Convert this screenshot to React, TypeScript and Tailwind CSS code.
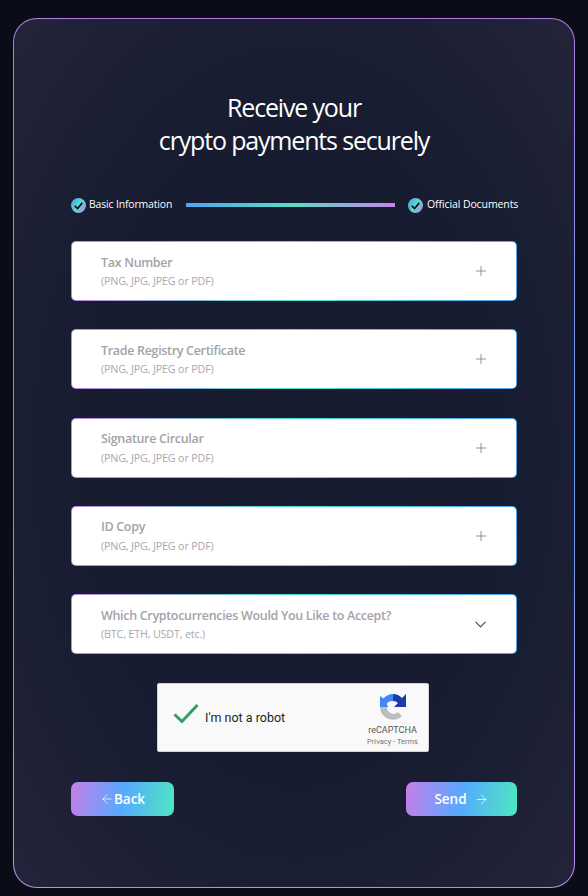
import React from "react";
import { Plus, ChevronDown, ArrowLeft, ArrowRight } from "lucide-react";

function Check({ id }: { id: string }) {
  return (
    <svg width="15" height="15" viewBox="0 0 16 16" className="shrink-0">
      <defs>
        <linearGradient id={id} x1="0" y1="0.2" x2="1" y2="0.8">
          <stop offset="0" stopColor="#4fa3f0" />
          <stop offset="0.5" stopColor="#55dcc8" />
          <stop offset="1" stopColor="#c084e8" />
        </linearGradient>
      </defs>
      <circle cx="8" cy="8" r="8" fill={`url(#${id})`} />
      <path d="M4 8.4 7 11.2 12 5.2" fill="none" stroke="#0b0d18" strokeWidth="1.7" />
    </svg>
  );
}

function Field({ title, sub, chevron, dir }: { title: string; sub: string; chevron?: boolean; dir: string }) {
  return (
    <div className={`h-[60px] rounded-[5px] p-px ${dir}`}>
      <div className="h-full rounded-[4px] bg-white pl-[29px] pr-[26px] flex items-center justify-between">
        <div className="flex flex-col">
          <span className="text-[12.5px] leading-[17px] font-semibold text-[#a3a3a8] tracking-[-0.32px]">{title}</span>
          <span className="text-[10.75px] leading-[15px] mt-[3.5px] -mb-[0.5px] text-[#a8a8ad] tracking-[-0.17px]">{sub}</span>
        </div>
        {chevron ? (
          <ChevronDown size={19} strokeWidth={1.5} className="text-[#4b5060]" />
        ) : (
          <Plus size={16} strokeWidth={1.3} className="text-[#7d8290] mr-[1px]" />
        )}
      </div>
    </div>
  );
}

export default function App() {
  const font = { fontFamily: '"Open Sans","Noto Sans",sans-serif' };
  const grad = "bg-[linear-gradient(100deg,#c77ee8_0%,#56a9ff_50%,#4de8c0_100%)]";
  const fields = "bg-[linear-gradient(90deg,#c084e8_0%,#55e0c8_50%,#4fa3f0_100%)]";
  return (
    <div className="w-[588px] h-[896px] bg-[#0a0c18] pt-[18px] pb-[8px] px-[13px] overflow-hidden" style={font}>
      <div className="h-[870px] rounded-[24px] p-px bg-[linear-gradient(180deg,#b27ce0_0%,#5f9cf5_50%,#c08ce8_100%)]">
        <div className="h-full rounded-[23px] bg-[radial-gradient(ellipse_at_center,#171c30_55%,#23243a_100%)] px-[57px] pt-[72px] flex flex-col">
          <h1 className="text-center text-white font-normal text-[25px] leading-[32.5px] tracking-[-1.17px]">
            Receive your
            <br />
            crypto payments securely
          </h1>
          <div className="mt-[41px] h-[16px] flex items-center">
            <Check id="c1" />
            <span className="ml-[3px] w-[83px] shrink-0 text-[10.4px] text-white tracking-[-0.13px] whitespace-nowrap">Basic Information</span>
            <div className="ml-[14px] w-[209px] shrink-0 h-[4px] bg-[linear-gradient(90deg,#4fa3f5_0%,#55dfc4_50%,#c685e8_100%)]" />
            <div className="ml-[13px] shrink-0"><Check id="c2" /></div>
            <span className="ml-[4px] shrink-0 text-[10.5px] text-white tracking-[-0.1px] whitespace-nowrap">Official Documents</span>
          </div>
          <div className="mt-[28px] flex flex-col gap-[28.25px]">
            <Field title="Tax Number" sub="(PNG, JPG, JPEG or PDF)" dir={fields} />
            <Field title="Trade Registry Certificate" sub="(PNG, JPG, JPEG or PDF)" dir={fields} />
            <Field title="Signature Circular" sub="(PNG, JPG, JPEG or PDF)" dir={fields} />
            <Field title="ID Copy" sub="(PNG, JPG, JPEG or PDF)" dir={fields} />
            <Field title="Which Cryptocurrencies Would You Like to Accept?" sub="(BTC, ETH, USDT, etc.)" chevron dir={fields} />
          </div>
          <div className="mt-[29px] ml-[86px] w-[272px] h-[69px] rounded-[2px] bg-[#f9f9f9] border border-[#d3d3d3] flex items-center pl-[15px] pr-[10px]" style={{ fontFamily: 'Roboto,sans-serif' }}>
            <svg width="26" height="21" viewBox="0 0 26 21" className="-mt-[9px] shrink-0">
              <path d="M1.5 11.5 9 18.5 24.5 2" fill="none" stroke="#2f9e63" strokeWidth="3" />
            </svg>
            <span className="ml-[6px] mt-[2px] text-[12.5px] text-[#1f1f1f]">I'm not a robot</span>
            <div className="ml-auto mt-[5px] flex flex-col items-center">
              <svg width="28" height="28" viewBox="0 0 28 28">
                <path d="M14 1 A13 13 0 0 1 23 5 L27 1 V14 H15 L19 10 A7 7 0 0 0 14 8Z" fill="#1c3aa9" />
                <path d="M14 1 A13 13 0 0 0 4.5 5.5 L1 3 V14 H9.5 L7.5 11 A7 7 0 0 1 14 8Z" fill="#4285f4" />
                <path d="M1 14 H8 A6.5 6.5 0 0 0 19 19 L23 23 A13 13 0 0 1 1 14Z" fill="#bdbdbd" />
              </svg>
              <span className="mt-[4px] text-[9px] leading-[11px] text-[#555]">reCAPTCHA</span>
              <span className="text-[7.5px] leading-[11px] text-[#777]">Privacy - Terms</span>
            </div>
          </div>
          <div className="mt-[30px] flex justify-between">
            <button className={`w-[103px] h-[34px] rounded-[7px] ${grad} flex items-center justify-center text-white font-semibold text-[13.5px]`}>
              <ArrowLeft size={14} strokeWidth={1.2} />
              <span>Back</span>
            </button>
            <button className={`w-[111px] h-[34px] rounded-[7px] ${grad} flex items-center justify-center text-white font-semibold text-[13.5px]`}>
              <span>Send</span>
              <ArrowRight size={15} strokeWidth={1.2} className="ml-[7px]" />
            </button>
          </div>
        </div>
      </div>
    </div>
  );
}
